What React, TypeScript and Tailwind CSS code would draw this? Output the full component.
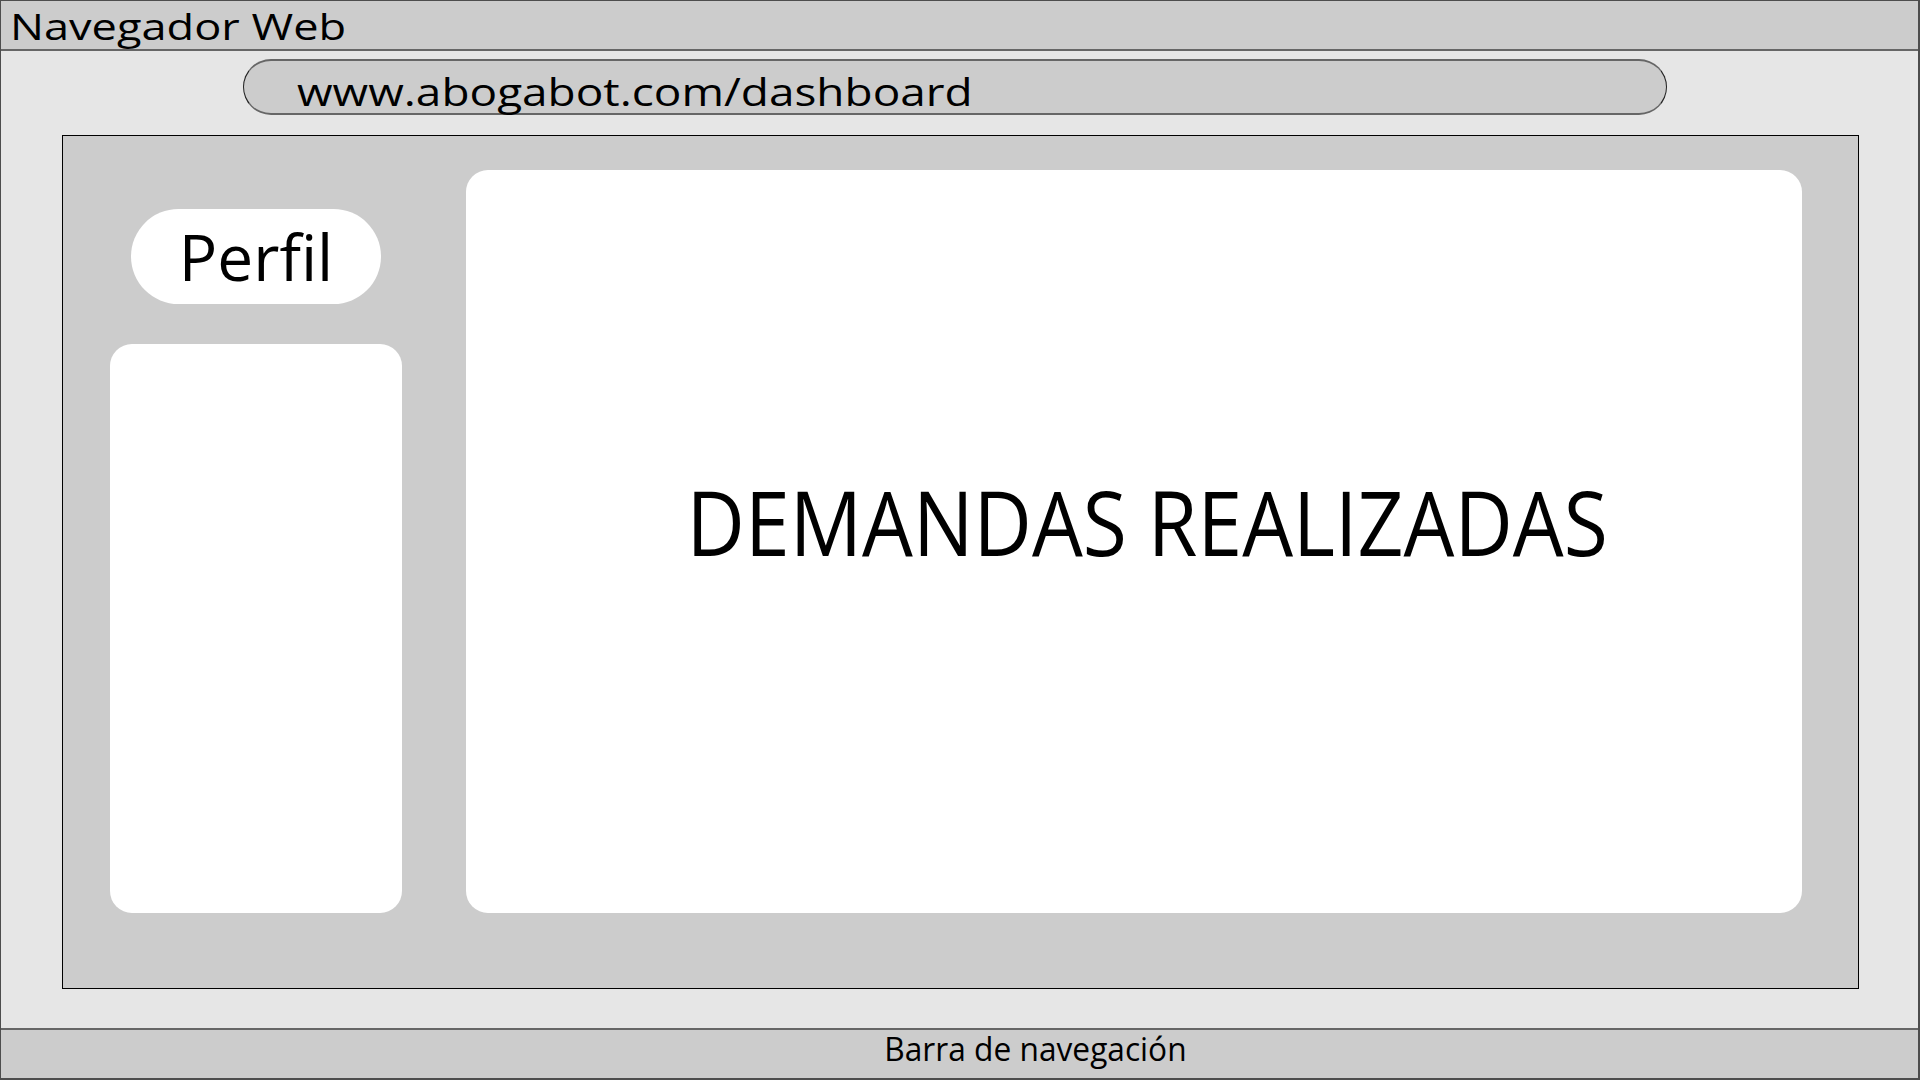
const App = () => {
  return (
    <div className="w-[1920px] h-[1080px] flex flex-col overflow-hidden bg-[#e6e6e6] border-t border-l border-r-2 border-b-2 border-[#4d4d4d] font-['Open_Sans',sans-serif] text-black">
      {/* Browser title bar */}
      <div className="h-[50px] shrink-0 flex items-center bg-[#cccccc] border-b-2 border-[#666666] pl-[9px]">
        <span className="inline-block text-[37px] leading-none origin-left scale-x-[1.22] pt-[1px]">
          Navegador Web
        </span>
      </div>

      {/* Browser viewport */}
      <div className="flex-1 flex flex-col pt-[8px] pb-[39px]">
        {/* Address bar */}
        <div className="ml-[242px] w-[1424px] h-[56px] shrink-0 flex items-start rounded-full bg-[#cccccc] border-x border-x-[#222222] border-y-2 border-y-[#666666] pl-[53px] pt-[10px]">
          <span className="inline-block text-[39px] leading-none origin-left scale-x-[1.178]">
            www.abogabot.com/dashboard
          </span>
        </div>

        {/* Page */}
        <div className="mt-[20px] ml-[61px] w-[1797px] flex-1 flex bg-[#cccccc] border-[1.5px] border-black pl-[47px] pt-[34px] pr-[56px] pb-[75px] gap-[64px]">
          {/* Sidebar */}
          <div className="w-[292px] flex flex-col items-center pt-[39px] gap-[40px]">
            <div className="w-[250px] h-[95px] rounded-full bg-white flex items-center justify-center">
              <span className="text-[64px] leading-none">Perfil</span>
            </div>
            <div className="w-full flex-1 rounded-[22px] bg-white" />
          </div>

          {/* Main panel */}
          <div className="flex-1 rounded-[22px] bg-white flex items-center justify-center pl-[26px] pb-[42px]">
            <span className="inline-block text-[90px] leading-none scale-x-[0.894] whitespace-nowrap">
              DEMANDAS REALIZADAS
            </span>
          </div>
        </div>
      </div>

      {/* Bottom bar */}
      <div className="h-[50px] shrink-0 flex items-start justify-center bg-[#cccccc] border-t-2 border-[#666666] pl-[152px] pt-[2px]">
        <span className="inline-block text-[33px] leading-none scale-x-[0.96] whitespace-nowrap">
          Barra de navegación
        </span>
      </div>
    </div>
  )
}

export default App
